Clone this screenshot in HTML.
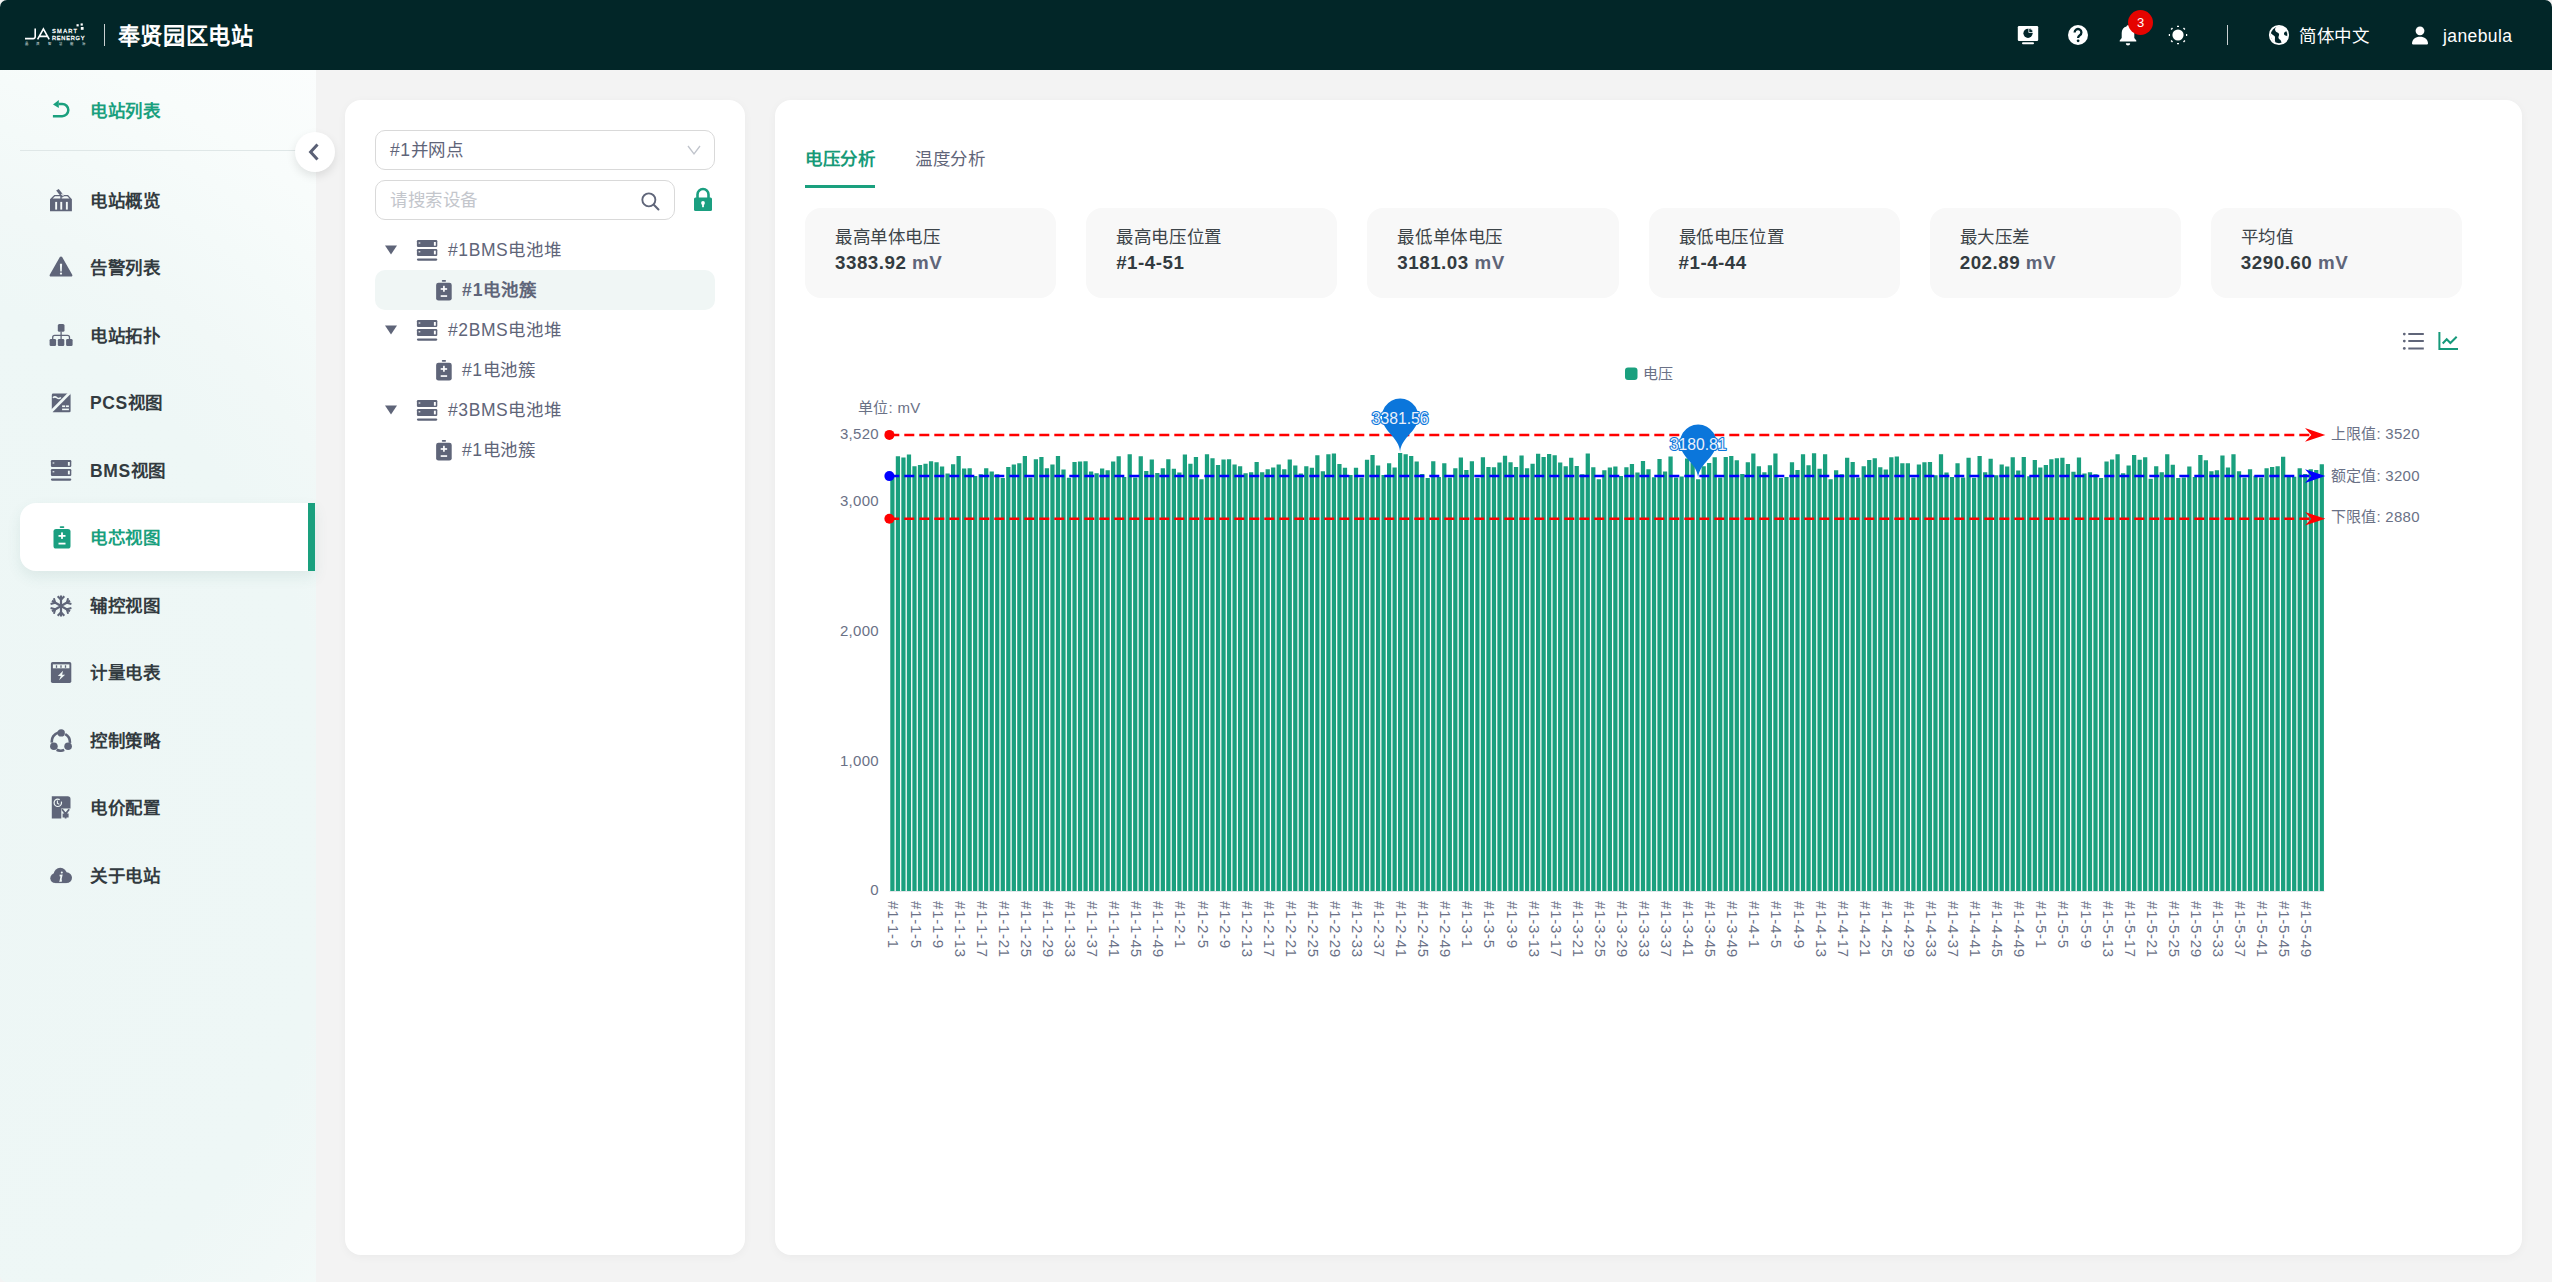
<!DOCTYPE html>
<html lang="zh-CN">
<head>
<meta charset="utf-8">
<title>奉贤园区电站</title>
<style>
*{box-sizing:border-box;margin:0;padding:0}
html,body{width:2552px;height:1282px;overflow:hidden}
body{font-family:"Liberation Sans",sans-serif;background:#f3f3f3;color:#333b40;position:relative;letter-spacing:.6px}
svg text{letter-spacing:0}
svg .xl text{letter-spacing:.72px}
svg .cl text{letter-spacing:.3px}
.abs{position:absolute}
/* header */
.header{position:absolute;left:0;top:0;width:2552px;height:70px;background:#022628;border-radius:7px 7px 0 0}
.header .divider{position:absolute;left:104px;top:24px;width:1px;height:22px;background:#c9d0d1}
.header .title{position:absolute;left:117.5px;top:1.500px;height:70px;line-height:70px;font-size:22.200px;letter-spacing:.7px;font-weight:bold;color:#fff;white-space:nowrap}
.hicon{position:absolute;top:0}
.htext{position:absolute;top:1px;height:70px;line-height:70px;color:#fff;font-size:17.5px;white-space:nowrap}
.hdiv{position:absolute;left:2227px;top:25px;width:1px;height:20px;background:#c9d0d1}
.badge{position:absolute;left:2128px;top:10px;width:25px;height:25px;border-radius:50%;background:#e50400;color:#fff;font-size:13px;line-height:25px;text-align:center;letter-spacing:0}
/* sidebar */
.sidebar{position:absolute;left:0;top:70px;width:316px;height:1212px;border-radius:0 0 0 7px;background:radial-gradient(circle at -228px 761px,#edf6f5 0,#eef7f6 570px,#f1f8f7 660px,#f4faf9 740px,#f8fcfb 830px,#fbfdfd 940px)}
.back{position:absolute;left:90px;top:21px;height:40px;line-height:40px;font-size:17.5px;font-weight:bold;color:#1aa07e;white-space:nowrap}
.sep{position:absolute;left:20px;top:80px;width:276px;height:1px;background:#dfe7e7}
.mi{position:absolute;left:20px;width:295.300px;height:68.200px;line-height:68px;font-size:17.5px;font-weight:bold;color:#333b40;white-space:nowrap}
.mi span{position:absolute;left:70px;top:1px}
.mi svg{position:absolute;left:28.800px;top:22.500px}
.mi.active{background:#fff;border-radius:16px 0 0 16px;color:#1aa07e;box-shadow:0 6px 14px rgba(60,120,110,.10)}
.mi.active:after{content:"";position:absolute;right:0;top:0;width:7.500px;height:68.200px;background:#1aa07e}
.collapse{position:absolute;left:295px;top:132px;width:40px;height:40px;border-radius:50%;background:#fff;box-shadow:0 4px 10px rgba(0,0,0,.10)}
/* panels */
.panel{position:absolute;background:#fff;border-radius:16px;box-shadow:0 2px 10px rgba(0,0,0,.04)}
.tree{left:345px;top:100px;width:400px;height:1155px}
.main{left:775px;top:100px;width:1747px;height:1155px}
.select{position:absolute;left:30px;top:30px;width:340px;height:40px;border:1px solid #d9d9d9;border-radius:10px;line-height:38px;padding-left:14px;font-size:17.5px;color:#5f6579}
.search{position:absolute;left:30px;top:80px;width:300px;height:40px;border:1px solid #d9d9d9;border-radius:10px;line-height:38px;padding-left:14px;font-size:17.5px;color:#c3c6cc}
.tr{position:absolute;left:30px;width:340px;height:40px;line-height:41px;font-size:17.5px;color:#5f6579;white-space:nowrap}
.tr.sel{background:#f0f6f5;border-radius:10px;font-weight:bold;letter-spacing:.9px}
.tr span{position:absolute;top:0}
.tr svg{position:absolute}
/* tabs */
.tab{position:absolute;top:39.500px;height:38px;line-height:38px;font-size:17.5px;color:#5f6579;white-space:nowrap}
.tab.on{color:#179a78;font-weight:bold}
.tabline{position:absolute;left:30px;top:85.200px;width:70px;height:2.600px;background:#1aa07e}
.cards{position:absolute;left:30px;top:108px;width:1657px;height:90px;display:flex;gap:30px}
.card{flex:1;background:#f8f8f8;border-radius:16px;padding:17px 0 0 30px;white-space:nowrap}
.card .t{font-size:17.5px;line-height:24px;color:#3d4449}
.card .v{font-size:18.800px;letter-spacing:.5px;line-height:28px;font-weight:bold;color:#333b40}
.card .v i{font-style:normal;color:#5f6579}
.chart{position:absolute;left:0;top:0;pointer-events:none}
</style>
</head>
<body>
<div class="header">
  <svg class="hicon" style="left:24px;top:22px" width="62" height="26" viewBox="0 0 62 26">
    <g fill="none" stroke="#fff" stroke-width="1.6">
      <path d="M1 16.6h8.2q2 0 2-2V6.4"/>
      <path d="M13.6 17.4L19.4 6.8L25.2 17.4M15.8 14.4h8.4"/>
    </g>
    <g fill="#fff" font-family="Liberation Sans, sans-serif">
      <text x="28" y="11" font-size="5.7" textLength="25" lengthAdjust="spacing" stroke="#fff" stroke-width=".28">SMART</text>
      <text x="28" y="17.6" font-size="5.7" textLength="32.5" lengthAdjust="spacing" stroke="#fff" stroke-width=".28">RENERGY</text>
      <rect x="52.5" y="2.200" width="2.200" height="2.200"/><rect x="56.600" y="1.400" width="2.200" height="2.200"/><rect x="56.800" y="5" width="2.800" height="2.800"/>
      <text x="1" y="23.400" font-size="3.400" textLength="59.5" lengthAdjust="spacing" fill="#dfe5e5">晶澳智慧能源</text>
    </g>
  </svg>
  <div class="divider"></div>
  <div class="title">奉贤园区电站</div>

  <!-- monitor -->
  <svg class="hicon" style="left:2016px;top:24px" width="24" height="22" viewBox="0 0 24 22"><path d="M3 2h18a1.2 1.2 0 0 1 1.2 1.2v12.6a1.2 1.2 0 0 1-1.2 1.2H3a1.2 1.2 0 0 1-1.2-1.2V3.200A1.2 1.200 0 0 1 3 2z" fill="#fff"/><rect x="6" y="18.300" width="12" height="2" rx="1" fill="#fff"/><circle cx="12" cy="9.300" r="4.600" fill="#02252a"/><path d="M12.800 4.200a4.600 4.600 0 0 1 4.300 4.300h-4.300z" fill="#02252a" stroke="#fff" stroke-width=".8"/></svg>
  <!-- help -->
  <svg class="hicon" style="left:2067px;top:24px" width="22" height="22" viewBox="0 0 22 22"><circle cx="11" cy="11" r="10" fill="#fff"/><path d="M7.600 8.400a3.400 3.400 0 1 1 5.200 2.900c-1.200.8-1.700 1.300-1.700 2.600" fill="none" stroke="#02252a" stroke-width="2.300"/><circle cx="11.100" cy="16.800" r="1.400" fill="#02252a"/></svg>
  <!-- bell -->
  <svg class="hicon" style="left:2117px;top:24px" width="22" height="22" viewBox="0 0 22 22"><path d="M11 1.200c.9 0 1.500.6 1.500 1.400 3 .7 4.800 3.200 4.800 6.400v5l2 2.600v1H2.700v-1l2-2.600V9c0-3.200 1.800-5.700 4.800-6.400 0-.8.600-1.400 1.500-1.400z" fill="#fff"/><path d="M8.800 19.200h4.400a2.200 2.200 0 0 1-4.400 0z" fill="#fff"/></svg>
  <div class="badge">3</div>
  <!-- sun -->
  <svg class="hicon" style="left:2167px;top:24px" width="22" height="22" viewBox="0 0 22 22"><circle cx="11" cy="11" r="5.600" fill="#fff"/><g stroke="#fff" stroke-width="2" stroke-linecap="butt"><path d="M11 1.800v1.200M11 19v1.200M1.800 11h1.200M19 11h1.200M4.300 4.300l1 1M16.700 16.700l1 1M4.300 17.700l1-1M16.700 5.300l1-1"/></g></svg>
  <div class="hdiv"></div>
  <!-- globe -->
  <svg class="hicon" style="left:2268px;top:24px" width="22" height="22" viewBox="0 0 22 22"><circle cx="11" cy="11" r="9.200" fill="#02252a" stroke="#fff" stroke-width="1.800"/><path d="M9 2.500c-2 1-2.500 3-1.500 4.500s3 1.500 3.500 3-1 2.500-.5 4 2 1.500 2.500 3 .5 2 1.500 2.500c3-1 5-4 5.500-7-1-1-2.500-.5-3.500-1.500s-.5-2.500.5-3 2-1 1.500-2.500c-2-2.500-6-4-9.500-3z" fill="#fff"/><path d="M2.500 9c1 .5 1.500 1.500 2.500 2s2 1 2 2.500-.5 3 .5 5C4 17 2 13 2.500 9z" fill="#fff"/></svg>
  <div class="htext" style="left:2299px">简体中文</div>
  <!-- user -->
  <svg class="hicon" style="left:2410px;top:25px" width="20" height="20" viewBox="0 0 20 20"><circle cx="10" cy="5.800" r="4.400" fill="#fff"/><path d="M2 18.600c0-4.400 3.600-6.800 8-6.800s8 2.400 8 6.800a.8.800 0 0 1-.8.800H2.800a.8.800 0 0 1-.8-.8z" fill="#fff"/></svg>
  <div class="htext" style="left:2443px;letter-spacing:.4px">janebula</div>
</div>

<div class="sidebar">
  <svg class="abs" style="left:50px;top:28px" width="24" height="22" viewBox="0 0 24 22"><path d="M8.800 5.950H12.200A6.100 6.100 0 0 1 12.200 18.200H2.900" fill="none" stroke="#1aa07e" stroke-width="2.500"/><path d="M3 6.400L8.800 2V10z" fill="#1aa07e"/></svg>
  <div class="back">电站列表</div>
  <div class="sep"></div>
  <div class="mi" style="top:95.5px"><i style="color:#5f6579"><svg width="24" height="24" viewBox="0 0 24 24" fill="currentColor"><path d="M1 11.300L5.300 7h13.700l3.900 4.300V23.300H1z"/><path d="M3.600 10.400L6 8.300h5.300v2.100zM12.700 8.300H18.300l2.200 2.100H12.700z" fill="#f5faf9"/><g fill="#f5faf9"><rect x="6.200" y="13.900" width="1.900" height="7.700"/><rect x="11.300" y="13.900" width="1.900" height="7.700"/><rect x="16.900" y="13.900" width="1.900" height="7.700"/></g><path d="M7.200 2.600l2.500-1.600 5.600 7-2.500 1.800z"/><path d="M11.700 6.300l1.700-1.100 1.500 2.300-.9 1z" fill="#f5faf9" opacity=".75"/></svg></i><span>电站概览</span></div>
  <div class="mi" style="top:163.0px"><i style="color:#5f6579"><svg style="margin-top:-1px" width="24" height="24" viewBox="0 0 24 24" fill="currentColor"><path d="M12 1.400c.5 0 .9.250 1.150.7l10.100 17.600c.5.900-.1 1.900-1.150 1.900H1.900c-1.050 0-1.650-1-1.150-1.900L10.850 2.100c.25-.45.650-.7 1.150-.7z"/><path d="M10.900 8.700h2.200l-.35 7.700h-1.500z" fill="#f3f9f8"/><circle cx="12" cy="18.600" r="1.150" fill="#f3f9f8"/></svg></i><span>告警列表</span></div>
  <div class="mi" style="top:230.5px"><i style="color:#5f6579"><svg width="24" height="24" viewBox="0 0 24 24" fill="currentColor"><rect x="8.800" y="1" width="6.700" height="7.700" rx="1.500"/><rect x="0.600" y="16" width="6.500" height="7.100" rx="1.300"/><rect x="8.800" y="16" width="6.500" height="7.100" rx="1.300"/><rect x="17.100" y="16" width="6.500" height="7.100" rx="1.300"/><path d="M12.100 8.500V16.200M3.700 16.200V14.400Q3.700 12.400 5.700 12.400H18.500Q20.500 12.400 20.500 14.400V16.200" fill="none" stroke="currentColor" stroke-width="1.300"/></svg></i><span>电站拓扑</span></div>
  <div class="mi" style="top:298.0px"><i style="color:#5f6579"><svg width="24" height="24" viewBox="0 0 24 24" fill="currentColor"><rect x="2.800" y="2.600" width="18.800" height="18.700" rx="1.400"/><path d="M2 20.700L20.600 2" stroke="#f0f8f7" stroke-width="2.700" fill="none"/><path d="M2.600 21.900l-1-1.100 1.200-1.200v2.300z" fill="#f0f8f7"/><path d="M3.900 6.700q2-1.700 4 0t4-.2" fill="none" stroke="#f0f8f7" stroke-width="1.500"/><rect x="13.100" y="14.400" width="3" height="1.700" fill="#f0f8f7"/><rect x="16.900" y="14.400" width="3" height="1.700" fill="#f0f8f7"/><rect x="13.100" y="17.600" width="6.800" height="1.600" fill="#f0f8f7"/></svg></i><span>PCS视图</span></div>
  <div class="mi" style="top:365.5px"><i style="color:#5f6579"><svg width="24" height="24" viewBox="0 0 24 24" fill="currentColor"><rect x="1.900" y="2.100" width="20.400" height="6.900" rx="1.200"/><rect x="1.900" y="11.100" width="20.400" height="6.800" rx="1.200"/><rect x="1.900" y="20.500" width="20.400" height="2.200" rx="1.100"/><rect x="18.900" y="4" width="1.900" height="3.700" fill="#eff7f6"/><rect x="18.900" y="12.700" width="1.900" height="3.700" fill="#eff7f6"/><rect x="3.600" y="4.300" width="1.700" height="1.400" fill="#eff7f6" opacity=".8"/><rect x="3.600" y="13" width="1.700" height="1.400" fill="#eff7f6" opacity=".8"/></svg></i><span>BMS视图</span></div>
  <div class="mi active" style="top:433.0px"><i style="color:#1a9f80"><svg style="margin-top:-1px" width="24" height="24" viewBox="0 0 24 24" fill="currentColor"><rect x="10.700" y="1.200" width="4.600" height="1.700" rx=".85"/><rect x="4.500" y="4" width="17" height="19.500" rx="2.600"/><g fill="#fff"><rect x="9.500" y="10" width="7" height="1.800"/><rect x="12.100" y="7.400" width="1.800" height="6.500"/><rect x="9.500" y="17.700" width="7" height="1.800"/></g></svg></i><span>电芯视图</span></div>
  <div class="mi" style="top:500.5px"><i style="color:#5f6579"><svg style="margin-top:0.6px" width="24" height="24" viewBox="0 0 24 24" fill="none" stroke="currentColor" stroke-width="2.200" stroke-linecap="butt"><path d="M12 1.600v20.800M3 6.800l18 10.400M3 17.200L21 6.800"/><path d="M8.700 2.300L12 5.800l3.300-3.500M8.700 21.700L12 18.200l3.300 3.500M1.600 10l4.600-1.200-1.300-4.600M22.400 14l-4.600 1.200 1.300 4.600M1.600 14l4.600 1.200-1.300 4.600M22.400 10l-4.600-1.200 1.300-4.600" stroke-width="2"/></svg></i><span>辅控视图</span></div>
  <div class="mi" style="top:568.0px"><i style="color:#5f6579"><svg style="margin-top:-1px" width="24" height="24" viewBox="0 0 24 24" fill="currentColor"><rect x="1.900" y="2.100" width="20.400" height="20.800" rx="1.600"/><rect x="3.900" y="4.400" width="16.500" height="3.900" fill="#eff7f6"/><rect x="6.850" y="5.300" width="1.300" height="2.500"/><rect x="11.350" y="5.300" width="1.300" height="2.500"/><rect x="15.850" y="5.300" width="1.300" height="2.500"/><path d="M14.100 10.800L8.800 16h3l-1.700 4.300 6-5.600h-3z" fill="#eff7f6"/></svg></i><span>计量电表</span></div>
  <div class="mi" style="top:635.5px"><i style="color:#5f6579"><svg width="24" height="24" viewBox="0 0 24 24" fill="currentColor"><circle cx="12.200" cy="4.900" r="3.700"/><circle cx="4.900" cy="18.200" r="3.800"/><circle cx="19.100" cy="18.200" r="3.800"/><path d="M9.500 4.400A9.200 9.200 0 0 0 2.900 14.600M16.200 6.200A9.200 9.200 0 0 1 20.900 14.800M7.600 21.800A9.200 9.200 0 0 0 15.200 21.900" fill="none" stroke="currentColor" stroke-width="2.600"/></svg></i><span>控制策略</span></div>
  <div class="mi" style="top:703.0px"><i style="color:#5f6579"><svg style="margin-top:-0.8px" width="24" height="24" viewBox="0 0 24 24" fill="currentColor"><path d="M2.800 1.200H18.700Q21.500 1.200 21.500 4V13.400H12.300V23.500H2.800z"/><circle cx="8.800" cy="7.800" r="3.700" fill="none" stroke="#eff7f6" stroke-width="1.200" stroke-dasharray="19 2.500"/><path d="M8.400 5.600v2.500l1.900 1.300" fill="none" stroke="#eff7f6" stroke-width="1.100"/><path d="M13 14.200l3.600 4.600 3.600-4.600M13.600 19.500h6M13.600 21.500h6M16.600 18.600v4.900" fill="none" stroke="currentColor" stroke-width="1.800"/></svg></i><span>电价配置</span></div>
  <div class="mi" style="top:770.5px"><i style="color:#5f6579"><svg width="24" height="24" viewBox="0 0 24 24" fill="currentColor"><circle cx="11.300" cy="11.400" r="6.600"/><circle cx="17.600" cy="14.700" r="5.400"/><circle cx="6.200" cy="15.200" r="4.900"/><rect x="6.200" y="14" width="11.400" height="6.100"/><circle cx="12.800" cy="9.400" r="1" fill="#eff7f6"/><path d="M10.600 12.700l2-.3-1.200 5.500 1.500-.3" fill="none" stroke="#eff7f6" stroke-width="1.700"/></svg></i><span>关于电站</span></div>
</div>
<div class="collapse"><svg width="40" height="40" viewBox="0 0 40 40"><path d="M22.500 12.600L15.600 20.100l6.900 7.500" fill="none" stroke="#5a6075" stroke-width="3" stroke-linecap="butt" stroke-linejoin="miter"/></svg></div>

<div class="panel tree">
  <div class="select">#1并网点<svg class="abs" style="right:13px;top:13px" width="14" height="12" viewBox="0 0 14 12"><path d="M1 2l6 8 6-8" fill="none" stroke="#c0c4cc" stroke-width="1.300"/></svg></div>
  <div class="search">请搜索设备<svg class="abs" style="right:14px;top:9.500px" width="20.500" height="20.500" viewBox="0 0 22 22"><circle cx="9.500" cy="9.500" r="7" fill="none" stroke="#5f6579" stroke-width="2"/><path d="M14.800 14.800l5 5" stroke="#5f6579" stroke-width="2.200" stroke-linecap="round"/></svg></div>
  <svg class="abs" style="left:347px;top:87px" width="22" height="26" viewBox="0 0 22 26"><path d="M5.500 11V7.500a5.500 5.500 0 0 1 11 0V11" fill="none" stroke="#1a9f80" stroke-width="2.600"/><rect x="2" y="10.500" width="18" height="13.500" rx="1.500" fill="#1a9f80"/><circle cx="11" cy="16" r="1.900" fill="#fff"/><rect x="10.100" y="16" width="1.800" height="4.200" fill="#fff"/></svg>
  <div class="tr" style="top:130px"><svg style="left:9px;top:14px" width="14" height="12" viewBox="0 0 14 12"><path d="M1 1.500h12L7 10.500z" fill="#5f6579"/></svg><svg style="left:40px;top:8px;color:#5f6579" width="24" height="24" viewBox="0 0 24 24" fill="currentColor"><rect x="1.900" y="2.100" width="20.400" height="6.900" rx="1.200"/><rect x="1.900" y="11.100" width="20.400" height="6.800" rx="1.200"/><rect x="1.900" y="20.500" width="20.400" height="2.200" rx="1.100"/><rect x="18.900" y="4" width="1.900" height="3.700" fill="#ffffff"/><rect x="18.900" y="12.700" width="1.900" height="3.700" fill="#ffffff"/><rect x="3.600" y="4.300" width="1.700" height="1.400" fill="#ffffff" opacity=".8"/><rect x="3.600" y="13" width="1.700" height="1.400" fill="#ffffff" opacity=".8"/></svg><span style="left:73px">#1BMS电池堆</span></div>
  <div class="tr sel" style="top:170px"><svg style="left:57px;top:9px;color:#5f6579" width="22" height="22" viewBox="0 0 24 24" fill="currentColor"><rect x="10.700" y="1.200" width="4.600" height="1.700" rx=".85"/><rect x="4.500" y="4" width="17" height="19.500" rx="2.600"/><g fill="#fff"><rect x="9.500" y="10" width="7" height="1.800"/><rect x="12.100" y="7.400" width="1.800" height="6.500"/><rect x="9.500" y="17.700" width="7" height="1.800"/></g></svg><span style="left:87px">#1电池簇</span></div>
  <div class="tr" style="top:210px"><svg style="left:9px;top:14px" width="14" height="12" viewBox="0 0 14 12"><path d="M1 1.500h12L7 10.500z" fill="#5f6579"/></svg><svg style="left:40px;top:8px;color:#5f6579" width="24" height="24" viewBox="0 0 24 24" fill="currentColor"><rect x="1.900" y="2.100" width="20.400" height="6.900" rx="1.200"/><rect x="1.900" y="11.100" width="20.400" height="6.800" rx="1.200"/><rect x="1.900" y="20.500" width="20.400" height="2.200" rx="1.100"/><rect x="18.900" y="4" width="1.900" height="3.700" fill="#ffffff"/><rect x="18.900" y="12.700" width="1.900" height="3.700" fill="#ffffff"/><rect x="3.600" y="4.300" width="1.700" height="1.400" fill="#ffffff" opacity=".8"/><rect x="3.600" y="13" width="1.700" height="1.400" fill="#ffffff" opacity=".8"/></svg><span style="left:73px">#2BMS电池堆</span></div>
  <div class="tr" style="top:250px"><svg style="left:57px;top:9px;color:#5f6579" width="22" height="22" viewBox="0 0 24 24" fill="currentColor"><rect x="10.700" y="1.200" width="4.600" height="1.700" rx=".85"/><rect x="4.500" y="4" width="17" height="19.500" rx="2.600"/><g fill="#fff"><rect x="9.500" y="10" width="7" height="1.800"/><rect x="12.100" y="7.400" width="1.800" height="6.500"/><rect x="9.500" y="17.700" width="7" height="1.800"/></g></svg><span style="left:87px">#1电池簇</span></div>
  <div class="tr" style="top:290px"><svg style="left:9px;top:14px" width="14" height="12" viewBox="0 0 14 12"><path d="M1 1.500h12L7 10.500z" fill="#5f6579"/></svg><svg style="left:40px;top:8px;color:#5f6579" width="24" height="24" viewBox="0 0 24 24" fill="currentColor"><rect x="1.900" y="2.100" width="20.400" height="6.900" rx="1.200"/><rect x="1.900" y="11.100" width="20.400" height="6.800" rx="1.200"/><rect x="1.900" y="20.500" width="20.400" height="2.200" rx="1.100"/><rect x="18.900" y="4" width="1.900" height="3.700" fill="#ffffff"/><rect x="18.900" y="12.700" width="1.900" height="3.700" fill="#ffffff"/><rect x="3.600" y="4.300" width="1.700" height="1.400" fill="#ffffff" opacity=".8"/><rect x="3.600" y="13" width="1.700" height="1.400" fill="#ffffff" opacity=".8"/></svg><span style="left:73px">#3BMS电池堆</span></div>
  <div class="tr" style="top:330px"><svg style="left:57px;top:9px;color:#5f6579" width="22" height="22" viewBox="0 0 24 24" fill="currentColor"><rect x="10.700" y="1.200" width="4.600" height="1.700" rx=".85"/><rect x="4.500" y="4" width="17" height="19.500" rx="2.600"/><g fill="#fff"><rect x="9.500" y="10" width="7" height="1.800"/><rect x="12.100" y="7.400" width="1.800" height="6.500"/><rect x="9.500" y="17.700" width="7" height="1.800"/></g></svg><span style="left:87px">#1电池簇</span></div>
</div>

<div class="panel main">
  <div class="tab on" style="left:30px">电压分析</div>
  <div class="tab" style="left:140px">温度分析</div>
  <div class="tabline"></div>
  <div class="cards">
    <div class="card"><div class="t">最高单体电压</div><div class="v">3383.92 <i>mV</i></div></div>
    <div class="card"><div class="t">最高电压位置</div><div class="v">#1-4-51</div></div>
    <div class="card"><div class="t">最低单体电压</div><div class="v">3181.03 <i>mV</i></div></div>
    <div class="card"><div class="t">最低电压位置</div><div class="v">#1-4-44</div></div>
    <div class="card"><div class="t">最大压差</div><div class="v">202.89 <i>mV</i></div></div>
    <div class="card"><div class="t">平均值</div><div class="v">3290.60 <i>mV</i></div></div>
  </div>
</div>

<!-- chart tool icons -->
<svg class="abs" style="left:2400px;top:328px" width="62" height="26" viewBox="0 0 62 26">
  <g stroke="#5f6579" stroke-width="2" stroke-linecap="butt"><path d="M8.300 6.100h15.500M8.300 13.100h15.500M8.300 20.400h15.500"/></g>
  <g fill="#5f6579"><circle cx="4.300" cy="6.100" r="1.400"/><circle cx="4.300" cy="13.100" r="1.400"/><circle cx="4.300" cy="20.400" r="1.400"/></g>
  <path d="M39.400 4v16.900H58" fill="none" stroke="#16997a" stroke-width="2"/>
  <path d="M42.700 15.500l4-4.300 3.700 3.800 6.300-6.300" fill="none" stroke="#16997a" stroke-width="2"/>
</svg>


<svg class="chart" width="2552" height="1282" viewBox="0 0 2552 1282">
  <g font-family="Liberation Sans, sans-serif" font-size="15" fill="#6a7186" class="cl">
    <rect x="1625" y="367.5" width="12.5" height="12.5" rx="3" fill="#1aa07e"/>
    <text x="1642.5" y="379">电压</text>
    <text x="858" y="413">单位<tspan x="888.6">: mV</tspan></text>
    <g text-anchor="end">
      <text x="879" y="438.9">3,520</text>
      <text x="879" y="505.6">3,000</text>
      <text x="879" y="636.4">2,000</text>
      <text x="879" y="765.9">1,000</text>
      <text x="879" y="895.0">0</text>
    </g>
    <text x="2330.5" y="439.2">上限值<tspan x="2376.4">: 3520</tspan></text>
    <text x="2330.5" y="480.6">额定值<tspan x="2376.4">: 3200</tspan></text>
    <text x="2330.5" y="522.1">下限值<tspan x="2376.4">: 2880</tspan></text>
  </g>
  <line x1="889.65" y1="891.5" x2="2324.55" y2="891.5" stroke="#e3e6ea" stroke-width="1"/>
  <path d="M890.28 891.0V475.3h4.25V891.0zM895.80 891.0V456.3h4.25V891.0zM901.32 891.0V457.6h4.25V891.0zM906.84 891.0V454.5h4.25V891.0zM912.36 891.0V466.2h4.25V891.0zM917.88 891.0V465.1h4.25V891.0zM923.40 891.0V463.7h4.25V891.0zM928.92 891.0V461.2h4.25V891.0zM934.44 891.0V462.3h4.25V891.0zM939.95 891.0V466.5h4.25V891.0zM945.47 891.0V473.6h4.25V891.0zM950.99 891.0V464.2h4.25V891.0zM956.51 891.0V456.1h4.25V891.0zM962.03 891.0V468.6h4.25V891.0zM967.55 891.0V468.3h4.25V891.0zM973.07 891.0V476.0h4.25V891.0zM978.59 891.0V474.3h4.25V891.0zM984.10 891.0V468.3h4.25V891.0zM989.62 891.0V471.4h4.25V891.0zM995.14 891.0V474.3h4.25V891.0zM1000.66 891.0V478.1h4.25V891.0zM1006.18 891.0V467.0h4.25V891.0zM1011.70 891.0V464.6h4.25V891.0zM1017.22 891.0V463.3h4.25V891.0zM1022.74 891.0V456.1h4.25V891.0zM1028.26 891.0V477.4h4.25V891.0zM1033.77 891.0V459.3h4.25V891.0zM1039.29 891.0V457.0h4.25V891.0zM1044.81 891.0V468.3h4.25V891.0zM1050.33 891.0V464.4h4.25V891.0zM1055.85 891.0V456.1h4.25V891.0zM1061.37 891.0V469.5h4.25V891.0zM1066.89 891.0V477.8h4.25V891.0zM1072.41 891.0V462.1h4.25V891.0zM1077.93 891.0V461.4h4.25V891.0zM1083.44 891.0V461.2h4.25V891.0zM1088.96 891.0V471.4h4.25V891.0zM1094.48 891.0V473.2h4.25V891.0zM1100.00 891.0V468.6h4.25V891.0zM1105.52 891.0V470.2h4.25V891.0zM1111.04 891.0V461.4h4.25V891.0zM1116.56 891.0V456.3h4.25V891.0zM1122.08 891.0V477.1h4.25V891.0zM1127.59 891.0V454.3h4.25V891.0zM1133.11 891.0V477.4h4.25V891.0zM1138.63 891.0V456.3h4.25V891.0zM1144.15 891.0V471.1h4.25V891.0zM1149.67 891.0V459.5h4.25V891.0zM1155.19 891.0V473.1h4.25V891.0zM1160.71 891.0V468.3h4.25V891.0zM1166.23 891.0V459.3h4.25V891.0zM1171.75 891.0V468.8h4.25V891.0zM1177.26 891.0V472.5h4.25V891.0zM1182.78 891.0V454.5h4.25V891.0zM1188.30 891.0V463.7h4.25V891.0zM1193.82 891.0V457.0h4.25V891.0zM1199.34 891.0V479.2h4.25V891.0zM1204.86 891.0V454.2h4.25V891.0zM1210.38 891.0V458.3h4.25V891.0zM1215.90 891.0V465.1h4.25V891.0zM1221.42 891.0V459.5h4.25V891.0zM1226.93 891.0V459.3h4.25V891.0zM1232.45 891.0V464.6h4.25V891.0zM1237.97 891.0V466.2h4.25V891.0zM1243.49 891.0V473.2h4.25V891.0zM1249.01 891.0V472.2h4.25V891.0zM1254.53 891.0V462.1h4.25V891.0zM1260.05 891.0V472.2h4.25V891.0zM1265.57 891.0V469.3h4.25V891.0zM1271.08 891.0V467.4h4.25V891.0zM1276.60 891.0V464.4h4.25V891.0zM1282.12 891.0V469.3h4.25V891.0zM1287.64 891.0V459.5h4.25V891.0zM1293.16 891.0V465.6h4.25V891.0zM1298.68 891.0V473.4h4.25V891.0zM1304.20 891.0V466.2h4.25V891.0zM1309.72 891.0V467.7h4.25V891.0zM1315.24 891.0V455.2h4.25V891.0zM1320.75 891.0V471.2h4.25V891.0zM1326.27 891.0V454.2h4.25V891.0zM1331.79 891.0V453.5h4.25V891.0zM1337.31 891.0V463.9h4.25V891.0zM1342.83 891.0V467.7h4.25V891.0zM1348.35 891.0V475.0h4.25V891.0zM1353.87 891.0V467.7h4.25V891.0zM1359.39 891.0V477.4h4.25V891.0zM1364.91 891.0V459.7h4.25V891.0zM1370.42 891.0V455.1h4.25V891.0zM1375.94 891.0V465.6h4.25V891.0zM1381.46 891.0V475.0h4.25V891.0zM1386.98 891.0V463.2h4.25V891.0zM1392.50 891.0V467.6h4.25V891.0zM1398.02 891.0V453.1h4.25V891.0zM1403.54 891.0V454.3h4.25V891.0zM1409.06 891.0V456.1h4.25V891.0zM1414.57 891.0V461.6h4.25V891.0zM1420.09 891.0V474.1h4.25V891.0zM1425.61 891.0V478.1h4.25V891.0zM1431.13 891.0V461.2h4.25V891.0zM1436.65 891.0V477.1h4.25V891.0zM1442.17 891.0V463.2h4.25V891.0zM1447.69 891.0V477.6h4.25V891.0zM1453.21 891.0V468.3h4.25V891.0zM1458.73 891.0V457.6h4.25V891.0zM1464.24 891.0V470.0h4.25V891.0zM1469.76 891.0V461.2h4.25V891.0zM1475.28 891.0V477.8h4.25V891.0zM1480.80 891.0V457.3h4.25V891.0zM1486.32 891.0V467.0h4.25V891.0zM1491.84 891.0V467.2h4.25V891.0zM1497.36 891.0V462.6h4.25V891.0zM1502.88 891.0V455.7h4.25V891.0zM1508.40 891.0V462.3h4.25V891.0zM1513.91 891.0V467.1h4.25V891.0zM1519.43 891.0V455.4h4.25V891.0zM1524.95 891.0V468.3h4.25V891.0zM1530.47 891.0V463.7h4.25V891.0zM1535.99 891.0V453.8h4.25V891.0zM1541.51 891.0V457.1h4.25V891.0zM1547.03 891.0V454.0h4.25V891.0zM1552.55 891.0V455.2h4.25V891.0zM1558.06 891.0V462.4h4.25V891.0zM1563.58 891.0V466.2h4.25V891.0zM1569.10 891.0V457.7h4.25V891.0zM1574.62 891.0V466.0h4.25V891.0zM1580.14 891.0V474.3h4.25V891.0zM1585.66 891.0V453.5h4.25V891.0zM1591.18 891.0V467.2h4.25V891.0zM1596.70 891.0V479.2h4.25V891.0zM1602.22 891.0V470.2h4.25V891.0zM1607.73 891.0V467.4h4.25V891.0zM1613.25 891.0V466.4h4.25V891.0zM1618.77 891.0V476.0h4.25V891.0zM1624.29 891.0V467.2h4.25V891.0zM1629.81 891.0V464.0h4.25V891.0zM1635.33 891.0V472.4h4.25V891.0zM1640.85 891.0V461.1h4.25V891.0zM1646.37 891.0V469.3h4.25V891.0zM1651.89 891.0V477.3h4.25V891.0zM1657.40 891.0V459.0h4.25V891.0zM1662.92 891.0V471.4h4.25V891.0zM1668.44 891.0V456.4h4.25V891.0zM1673.96 891.0V477.4h4.25V891.0zM1679.48 891.0V476.4h4.25V891.0zM1685.00 891.0V458.4h4.25V891.0zM1690.52 891.0V462.6h4.25V891.0zM1696.04 891.0V479.2h4.25V891.0zM1701.55 891.0V466.2h4.25V891.0zM1707.07 891.0V463.0h4.25V891.0zM1712.59 891.0V457.3h4.25V891.0zM1718.11 891.0V477.6h4.25V891.0zM1723.63 891.0V457.1h4.25V891.0zM1729.15 891.0V455.9h4.25V891.0zM1734.67 891.0V460.2h4.25V891.0zM1740.19 891.0V474.1h4.25V891.0zM1745.71 891.0V462.3h4.25V891.0zM1751.22 891.0V453.6h4.25V891.0zM1756.74 891.0V466.2h4.25V891.0zM1762.26 891.0V472.2h4.25V891.0zM1767.78 891.0V465.2h4.25V891.0zM1773.30 891.0V453.5h4.25V891.0zM1778.82 891.0V478.1h4.25V891.0zM1784.34 891.0V477.1h4.25V891.0zM1789.86 891.0V462.3h4.25V891.0zM1795.38 891.0V470.0h4.25V891.0zM1800.89 891.0V454.2h4.25V891.0zM1806.41 891.0V465.3h4.25V891.0zM1811.93 891.0V453.3h4.25V891.0zM1817.45 891.0V468.8h4.25V891.0zM1822.97 891.0V454.2h4.25V891.0zM1828.49 891.0V479.2h4.25V891.0zM1834.01 891.0V470.2h4.25V891.0zM1839.53 891.0V474.3h4.25V891.0zM1845.04 891.0V457.7h4.25V891.0zM1850.56 891.0V462.1h4.25V891.0zM1856.08 891.0V477.6h4.25V891.0zM1861.60 891.0V466.2h4.25V891.0zM1867.12 891.0V460.0h4.25V891.0zM1872.64 891.0V458.3h4.25V891.0zM1878.16 891.0V467.2h4.25V891.0zM1883.68 891.0V469.5h4.25V891.0zM1889.20 891.0V457.3h4.25V891.0zM1894.71 891.0V456.4h4.25V891.0zM1900.23 891.0V463.3h4.25V891.0zM1905.75 891.0V463.2h4.25V891.0zM1911.27 891.0V477.6h4.25V891.0zM1916.79 891.0V464.4h4.25V891.0zM1922.31 891.0V462.3h4.25V891.0zM1927.83 891.0V462.1h4.25V891.0zM1933.35 891.0V475.3h4.25V891.0zM1938.87 891.0V454.3h4.25V891.0zM1944.38 891.0V472.5h4.25V891.0zM1949.90 891.0V476.9h4.25V891.0zM1955.42 891.0V463.3h4.25V891.0zM1960.94 891.0V477.6h4.25V891.0zM1966.46 891.0V457.7h4.25V891.0zM1971.98 891.0V477.8h4.25V891.0zM1977.50 891.0V455.9h4.25V891.0zM1983.02 891.0V472.2h4.25V891.0zM1988.53 891.0V458.8h4.25V891.0zM1994.05 891.0V475.3h4.25V891.0zM1999.57 891.0V464.6h4.25V891.0zM2005.09 891.0V466.5h4.25V891.0zM2010.61 891.0V457.3h4.25V891.0zM2016.13 891.0V470.5h4.25V891.0zM2021.65 891.0V457.0h4.25V891.0zM2027.17 891.0V476.2h4.25V891.0zM2032.69 891.0V460.0h4.25V891.0zM2038.20 891.0V467.4h4.25V891.0zM2043.72 891.0V465.1h4.25V891.0zM2049.24 891.0V459.3h4.25V891.0zM2054.76 891.0V458.3h4.25V891.0zM2060.28 891.0V457.7h4.25V891.0zM2065.80 891.0V463.9h4.25V891.0zM2071.32 891.0V471.8h4.25V891.0zM2076.84 891.0V457.6h4.25V891.0zM2082.36 891.0V473.4h4.25V891.0zM2087.87 891.0V472.2h4.25V891.0zM2093.39 891.0V474.3h4.25V891.0zM2098.91 891.0V478.0h4.25V891.0zM2104.43 891.0V461.6h4.25V891.0zM2109.95 891.0V459.5h4.25V891.0zM2115.47 891.0V454.2h4.25V891.0zM2120.99 891.0V473.2h4.25V891.0zM2126.51 891.0V465.5h4.25V891.0zM2132.02 891.0V454.9h4.25V891.0zM2137.54 891.0V459.8h4.25V891.0zM2143.06 891.0V457.3h4.25V891.0zM2148.58 891.0V478.7h4.25V891.0zM2154.10 891.0V466.2h4.25V891.0zM2159.62 891.0V472.2h4.25V891.0zM2165.14 891.0V454.2h4.25V891.0zM2170.66 891.0V464.7h4.25V891.0zM2176.18 891.0V478.1h4.25V891.0zM2181.69 891.0V477.6h4.25V891.0zM2187.21 891.0V466.5h4.25V891.0zM2192.73 891.0V477.1h4.25V891.0zM2198.25 891.0V454.9h4.25V891.0zM2203.77 891.0V460.2h4.25V891.0zM2209.29 891.0V471.2h4.25V891.0zM2214.81 891.0V470.2h4.25V891.0zM2220.33 891.0V455.4h4.25V891.0zM2225.85 891.0V467.4h4.25V891.0zM2231.36 891.0V454.2h4.25V891.0zM2236.88 891.0V471.2h4.25V891.0zM2242.40 891.0V477.4h4.25V891.0zM2247.92 891.0V469.3h4.25V891.0zM2253.44 891.0V475.7h4.25V891.0zM2258.96 891.0V477.4h4.25V891.0zM2264.48 891.0V468.3h4.25V891.0zM2270.00 891.0V466.9h4.25V891.0zM2275.51 891.0V466.3h4.25V891.0zM2281.03 891.0V456.8h4.25V891.0zM2286.55 891.0V477.1h4.25V891.0zM2292.07 891.0V476.7h4.25V891.0zM2297.59 891.0V468.3h4.25V891.0zM2303.11 891.0V474.0h4.25V891.0zM2308.63 891.0V469.3h4.25V891.0zM2314.15 891.0V470.1h4.25V891.0zM2319.67 891.0V464.2h4.25V891.0z" fill="#1aa07e"/>
  <line x1="889.3" y1="434.9" x2="2314.6" y2="434.9" stroke="#ff0000" stroke-width="2.5" stroke-dasharray="10 5"/><circle cx="889.4" cy="434.9" r="5" fill="#ff0000"/><path d="M2325.3 434.9L2305.0 428.1L2311.3 434.9L2305.0 441.7Z" fill="#ff0000"/>
  <line x1="889.3" y1="476.1" x2="2314.6" y2="476.1" stroke="#0000ff" stroke-width="2.5" stroke-dasharray="10 5"/><circle cx="889.4" cy="476.1" r="5" fill="#0000ff"/><path d="M2325.3 476.1L2305.0 469.3L2311.3 476.1L2305.0 482.9Z" fill="#0000ff"/>
  <line x1="889.3" y1="518.7" x2="2314.6" y2="518.7" stroke="#ff0000" stroke-width="2.5" stroke-dasharray="10 5"/><circle cx="889.4" cy="518.7" r="5" fill="#ff0000"/><path d="M2325.3 518.7L2305.0 511.9L2311.3 518.7L2305.0 525.5Z" fill="#ff0000"/>
  <path d="M1383.59 424.16A18.2 18.2 0 1 1 1416.70 424.16C1412.16 434.10 1400.14 440.10 1400.14 452.84C1400.14 440.10 1388.13 434.10 1383.59 424.16Z" fill="#0b76db"/>
  <path d="M1681.61 450.18A18.2 18.2 0 1 1 1714.72 450.18C1710.18 460.11 1698.16 466.11 1698.16 478.85C1698.16 466.11 1686.14 460.11 1681.61 450.18Z" fill="#0b76db"/>
  <g font-family="Liberation Sans, sans-serif" font-size="15.7" fill="#e9f0fa" text-anchor="middle" stroke="#0b76db" stroke-width="2.2" paint-order="stroke" stroke-linejoin="round">
    <text x="1400.1" y="424">3381.56</text>
    <text x="1698.2" y="450">3180.81</text>
  </g>
  <g font-family="Liberation Sans, sans-serif" font-size="15" fill="#6b7287" class="xl">
  <text transform="translate(888.4 901.1) rotate(90)">#1-1-1</text>
<text transform="translate(910.5 901.1) rotate(90)">#1-1-5</text>
<text transform="translate(932.6 901.1) rotate(90)">#1-1-9</text>
<text transform="translate(954.6 901.1) rotate(90)">#1-1-13</text>
<text transform="translate(976.7 901.1) rotate(90)">#1-1-17</text>
<text transform="translate(998.8 901.1) rotate(90)">#1-1-21</text>
<text transform="translate(1020.9 901.1) rotate(90)">#1-1-25</text>
<text transform="translate(1042.9 901.1) rotate(90)">#1-1-29</text>
<text transform="translate(1065.0 901.1) rotate(90)">#1-1-33</text>
<text transform="translate(1087.1 901.1) rotate(90)">#1-1-37</text>
<text transform="translate(1109.2 901.1) rotate(90)">#1-1-41</text>
<text transform="translate(1131.2 901.1) rotate(90)">#1-1-45</text>
<text transform="translate(1153.3 901.1) rotate(90)">#1-1-49</text>
<text transform="translate(1175.4 901.1) rotate(90)">#1-2-1</text>
<text transform="translate(1197.5 901.1) rotate(90)">#1-2-5</text>
<text transform="translate(1219.5 901.1) rotate(90)">#1-2-9</text>
<text transform="translate(1241.6 901.1) rotate(90)">#1-2-13</text>
<text transform="translate(1263.7 901.1) rotate(90)">#1-2-17</text>
<text transform="translate(1285.8 901.1) rotate(90)">#1-2-21</text>
<text transform="translate(1307.8 901.1) rotate(90)">#1-2-25</text>
<text transform="translate(1329.9 901.1) rotate(90)">#1-2-29</text>
<text transform="translate(1352.0 901.1) rotate(90)">#1-2-33</text>
<text transform="translate(1374.1 901.1) rotate(90)">#1-2-37</text>
<text transform="translate(1396.1 901.1) rotate(90)">#1-2-41</text>
<text transform="translate(1418.2 901.1) rotate(90)">#1-2-45</text>
<text transform="translate(1440.3 901.1) rotate(90)">#1-2-49</text>
<text transform="translate(1462.4 901.1) rotate(90)">#1-3-1</text>
<text transform="translate(1484.4 901.1) rotate(90)">#1-3-5</text>
<text transform="translate(1506.5 901.1) rotate(90)">#1-3-9</text>
<text transform="translate(1528.6 901.1) rotate(90)">#1-3-13</text>
<text transform="translate(1550.7 901.1) rotate(90)">#1-3-17</text>
<text transform="translate(1572.7 901.1) rotate(90)">#1-3-21</text>
<text transform="translate(1594.8 901.1) rotate(90)">#1-3-25</text>
<text transform="translate(1616.9 901.1) rotate(90)">#1-3-29</text>
<text transform="translate(1639.0 901.1) rotate(90)">#1-3-33</text>
<text transform="translate(1661.0 901.1) rotate(90)">#1-3-37</text>
<text transform="translate(1683.1 901.1) rotate(90)">#1-3-41</text>
<text transform="translate(1705.2 901.1) rotate(90)">#1-3-45</text>
<text transform="translate(1727.3 901.1) rotate(90)">#1-3-49</text>
<text transform="translate(1749.3 901.1) rotate(90)">#1-4-1</text>
<text transform="translate(1771.4 901.1) rotate(90)">#1-4-5</text>
<text transform="translate(1793.5 901.1) rotate(90)">#1-4-9</text>
<text transform="translate(1815.6 901.1) rotate(90)">#1-4-13</text>
<text transform="translate(1837.7 901.1) rotate(90)">#1-4-17</text>
<text transform="translate(1859.7 901.1) rotate(90)">#1-4-21</text>
<text transform="translate(1881.8 901.1) rotate(90)">#1-4-25</text>
<text transform="translate(1903.9 901.1) rotate(90)">#1-4-29</text>
<text transform="translate(1926.0 901.1) rotate(90)">#1-4-33</text>
<text transform="translate(1948.0 901.1) rotate(90)">#1-4-37</text>
<text transform="translate(1970.1 901.1) rotate(90)">#1-4-41</text>
<text transform="translate(1992.2 901.1) rotate(90)">#1-4-45</text>
<text transform="translate(2014.3 901.1) rotate(90)">#1-4-49</text>
<text transform="translate(2036.3 901.1) rotate(90)">#1-5-1</text>
<text transform="translate(2058.4 901.1) rotate(90)">#1-5-5</text>
<text transform="translate(2080.5 901.1) rotate(90)">#1-5-9</text>
<text transform="translate(2102.6 901.1) rotate(90)">#1-5-13</text>
<text transform="translate(2124.6 901.1) rotate(90)">#1-5-17</text>
<text transform="translate(2146.7 901.1) rotate(90)">#1-5-21</text>
<text transform="translate(2168.8 901.1) rotate(90)">#1-5-25</text>
<text transform="translate(2190.9 901.1) rotate(90)">#1-5-29</text>
<text transform="translate(2212.9 901.1) rotate(90)">#1-5-33</text>
<text transform="translate(2235.0 901.1) rotate(90)">#1-5-37</text>
<text transform="translate(2257.1 901.1) rotate(90)">#1-5-41</text>
<text transform="translate(2279.2 901.1) rotate(90)">#1-5-45</text>
<text transform="translate(2301.2 901.1) rotate(90)">#1-5-49</text>
  </g>
</svg>

</body>
</html>
